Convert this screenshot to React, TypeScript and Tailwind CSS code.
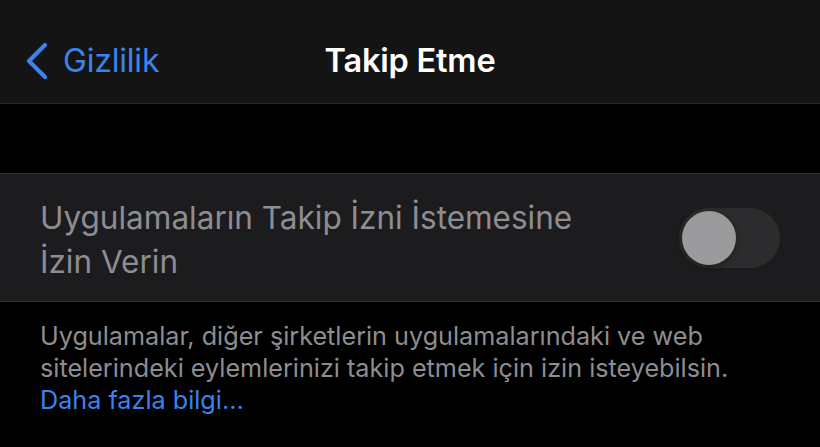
import { useState } from "react";

const font = { fontFamily: "Inter, 'Noto Sans', sans-serif" };

function BackChevron() {
  return (
    <svg width="24" height="38" viewBox="0 0 24 38" fill="none" aria-hidden>
      <path
        d="M20 3 L4 19 L20 35"
        stroke="#3a84ec"
        strokeWidth="4.2"
        strokeLinecap="round"
        strokeLinejoin="round"
      />
    </svg>
  );
}

function Toggle({ on, onChange }: { on: boolean; onChange: (v: boolean) => void }) {
  return (
    <button
      type="button"
      onClick={() => onChange(!on)}
      className={`flex h-[60px] w-[101px] shrink-0 items-center rounded-full p-[3px] ${
        on ? "justify-end bg-[#34c759]" : "justify-start bg-[#2c2c2e]"
      }`}
    >
      <span className="h-[54px] w-[54px] rounded-full bg-[#9b9b9d] shadow-[0_2px_6px_rgba(0,0,0,0.35)]" />
    </button>
  );
}

export default function App() {
  const [allow, setAllow] = useState(false);

  return (
    <div className="h-[447px] w-[820px] overflow-hidden bg-black" style={font}>
      <header className="relative flex h-[104px] items-center border-b border-[#2a2a2c] bg-[#141414] pt-[18px]">
        <div className="flex items-center gap-[14px] pl-[25px] text-[32px] text-[#3a84ec]">
          <BackChevron />
          <span className="tracking-[-0.2px]">Gizlilik</span>
        </div>
        <h1 className="absolute left-1/2 top-[61px] -translate-x-1/2 -translate-y-1/2 text-[32.5px] font-semibold tracking-[-0.2px] text-white">
          Takip Etme
        </h1>
      </header>

      <div className="h-[69px]" />

      <section className="flex h-[129px] items-center justify-between border-y border-[#323234] bg-[#1c1c1e] pl-[40px] pr-[40px]">
        <p className="pt-[4px] text-[31.5px] leading-[44px] text-[#8d8d92]">
          Uygulamaların Takip İzni İstemesine
          <br />
          İzin Verin
        </p>
        <Toggle on={allow} onChange={setAllow} />
      </section>

      <p className="px-[40px] pt-[18px] text-[25.2px] leading-[32px] text-[#8d8d92]">
        Uygulamalar, diğer şirketlerin uygulamalarındaki ve web
        <br />
        sitelerindeki eylemlerinizi takip etmek için izin isteyebilsin.
        <br />
        <span className="text-[#3a84ec]">Daha fazla bilgi...</span>
      </p>
    </div>
  );
}
